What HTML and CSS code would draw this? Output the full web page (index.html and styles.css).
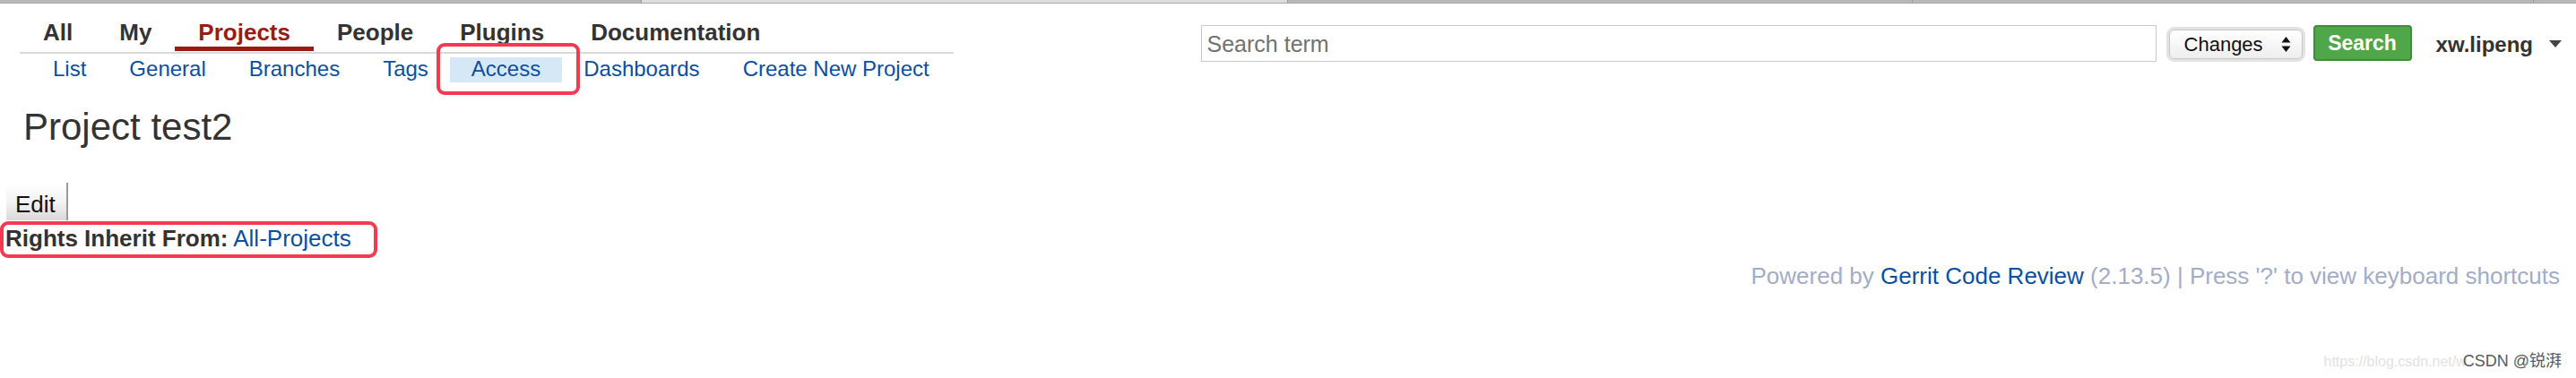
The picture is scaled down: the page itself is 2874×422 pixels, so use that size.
FILE: index.html
```html
<!DOCTYPE html>
<html lang="en">
<head>
<meta charset="utf-8">
<title>Project test2 - Access</title>
<link rel="stylesheet" href="styles.css">
</head>
<body>
<div class="tabstrip">
  <span class="tab tab-dark tab-a"></span>
  <span class="tab tab-light tab-b"></span>
  <span class="tab tab-dark tab-c"></span>
  <span class="tab tab-dark tab-d"></span>
  <span class="tab tab-dark tab-e"></span>
</div>
<header class="topbar">
  <nav class="nav">
    <ul class="menu">
      <li class="menu-item">All</li>
      <li class="menu-item">My</li>
      <li class="menu-item menu-active">Projects</li>
      <li class="menu-item">People</li>
      <li class="menu-item">Plugins</li>
      <li class="menu-item">Documentation</li>
    </ul>
    <ul class="submenu">
      <li class="sub-item">List</li>
      <li class="sub-item">General</li>
      <li class="sub-item">Branches</li>
      <li class="sub-item">Tags</li>
      <li class="sub-item sub-active">Access</li>
      <li class="sub-item">Dashboards</li>
      <li class="sub-item">Create New Project</li>
    </ul>
  </nav>
  <div class="search">
    <div class="search-input"><span class="placeholder">Search term</span></div>
    <div class="select">
      <div class="select-inner">
        <span class="select-text">Changes</span>
        <svg class="select-arrows" width="11" height="17" viewBox="0 0 11 17"><path d="M5.5 0 L10.5 6.5 L0.5 6.5 Z M5.5 17 L10.5 10.5 L0.5 10.5 Z" fill="#111"/></svg>
      </div>
    </div>
    <div class="search-btn">Search</div>
    <div class="user">xw.lipeng</div>
    <svg class="user-caret" width="14" height="8" viewBox="0 0 14 8"><path d="M0 0 L14 0 L7 8 Z" fill="#444"/></svg>
  </div>
</header>
<main class="content">
  <h1 class="title">Project test2</h1>
  <div class="edit-row"><span class="edit-btn">Edit</span></div>
  <div class="rights"><span class="rights-label">Rights Inherit From:</span> <a class="link">All-Projects</a></div>
</main>
<footer class="footer">Powered by <a class="link">Gerrit Code Review</a> (2.13.5) | Press '?' to view keyboard shortcuts</footer>

<div class="annot annot-access"></div>
<div class="annot annot-rights"></div>
<div class="watermark"><span class="wm-url">https://blog.csdn.net/w</span><span class="wm-name">CSDN @锐湃</span></div>
</body>
</html>
```

FILE: styles.css
```css
html, body {
  margin: 0;
  padding: 0;
  background: #fff;
}
body {
  font-family: "Liberation Sans", Arial, "Noto Sans CJK SC", sans-serif;
  color: #333;
  width: 2874px;
  height: 422px;
  position: relative;
  overflow: hidden;
}
ul { list-style: none; margin: 0; padding: 0; }

.tabstrip {
  display: flex;
  height: 3px;
  border-bottom: 1px solid #a9a9a9;
}
.tab { display: block; height: 100%; border-right: 1px solid #9a9a9a; }
.tab-dark { background: #b8b8b8; }
.tab-light { background: #dcdcdc; }
.tab-a { width: 715px; }
.tab-b { width: 720px; }
.tab-c { width: 696px; }
.tab-d { width: 692px; }
.tab-e { flex: 1; border-right: none; }

.topbar {
  display: flex;
  justify-content: space-between;
  align-items: flex-start;
  padding: 17px 16px 0 22px;
}
.nav {
  display: inline-flex;
  flex-direction: column;
}
.menu {
  display: flex;
  margin-bottom: 1px;
}
.menu-item {
  font-size: 26px;
  font-weight: bold;
  line-height: 30px;
  padding: 0 26px 1px;
  border-bottom: 5px solid transparent;
  color: #333;
}
.menu-active {
  color: #9a1b12;
  border-bottom-color: #9a1b12;
}
.submenu {
  display: flex;
  border-top: 2px solid #dadada;
  padding: 4px 3px 0 13px;
}
.sub-item {
  font-size: 24px;
  line-height: 26px;
  padding: 0 24px 2px;
  color: #0b4fa2;
}
.sub-active {
  background: #d6e8f6;
}

.search {
  display: flex;
  align-items: center;
  margin-top: 6px;
}
.search-input {
  height: 39px;
  border: 1px solid #c9c9c9;
  display: flex;
  align-items: center;
  padding: 0 6px;
  box-sizing: content-box;
  width: 1052px;
}
.placeholder {
  font-size: 25px;
  color: #727272;
  margin-top: 2px;
}
.select {
  margin-left: 11px;
  margin-top: 3px;
  border: 3px solid #e3e3e3;
  border-radius: 9px;
  width: 149px;
  height: 33px;
  box-sizing: content-box;
  display: flex;
}
.select-inner {
  flex: 1;
  display: flex;
  align-items: center;
  justify-content: space-between;
  border: 1px solid #c6c6c6;
  border-radius: 6px;
  background: linear-gradient(#ffffff, #eeeeee);
  padding: 0 12px 0 16px;
}
.select-text {
  font-size: 22px;
  color: #111;
  margin-top: 1px;
}
.select-arrows { display: block; }
.search-btn {
  margin-left: 9px;
  width: 106px;
  height: 36px;
  border: 2px solid #3e8e39;
  border-radius: 4px;
  background: #50a749;
  color: #fff;
  font-weight: bold;
  font-size: 23px;
  display: flex;
  align-items: center;
  justify-content: center;
}
.user {
  margin-left: 27px;
  margin-top: 3px;
  font-size: 24px;
  font-weight: bold;
  color: #333;
}
.user-caret {
  display: block;
  margin-left: 18px;
  margin-top: 2px;
}

.content {
  padding: 0 0 0 6px;
}
.title {
  margin: 26px 0 0 0;
  padding-left: 20px;
  font-size: 42px;
  line-height: 48px;
  font-weight: normal;
  color: #333;
}
.edit-row {
  margin-top: 38px;
  display: flex;
}
.edit-btn {
  margin-left: 1px;
  height: 42px;
  box-sizing: border-box;
  padding: 6px 12px 0 10px;
  font-size: 26px;
  line-height: 36px;
  color: #111;
  background: linear-gradient(#ffffff, #f3f3f3 50%, #d9d9d9);
  border-right: 2px solid #9a9a9a;
}
.rights {
  margin-top: 5px;
  font-size: 26px;
  line-height: 30px;
}
.rights-label {
  font-weight: bold;
  color: #333;
}
.link {
  color: #0b4fa2;
  text-decoration: none;
}
.footer {
  margin-top: 12px;
  text-align: right;
  padding-right: 18px;
  font-size: 26px;
  line-height: 30px;
  color: #a3acc8;
}

.annot {
  position: absolute;
  border: 4px solid #f5394e;
  border-radius: 9px;
  box-sizing: border-box;
}
.annot-access {
  left: 487px;
  top: 48px;
  width: 160px;
  height: 58px;
}
.annot-rights {
  left: 0;
  top: 247px;
  width: 421px;
  height: 41px;
}
.watermark {
  position: absolute;
  right: 16px;
  top: 393px;
  display: flex;
  align-items: baseline;
  line-height: 20px;
}
.wm-url {
  font-size: 16px;
  color: #e2e2e2;
  margin-right: -4px;
}
.wm-name {
  font-size: 18px;
  color: #5a5a5a;
}
```
